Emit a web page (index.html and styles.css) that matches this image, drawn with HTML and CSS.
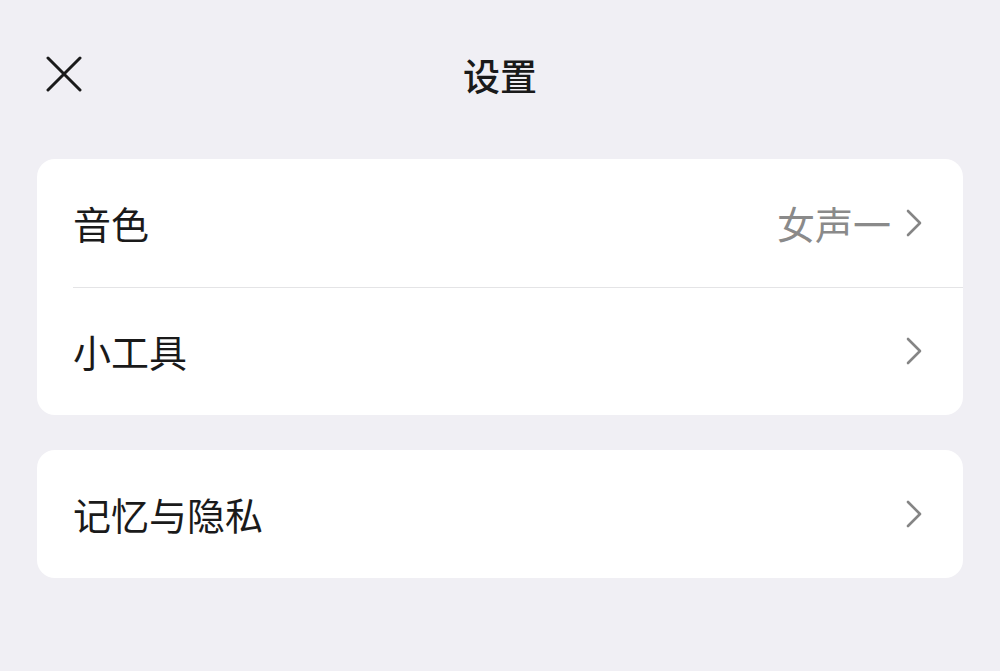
FILE: index.html
```html
<!DOCTYPE html>
<html lang="zh">
<head>
<meta charset="utf-8">
<link rel="stylesheet" href="styles.css">
</head>
<body>
<header class="header">
  <button class="close" aria-label="关闭">
    <svg width="36" height="36" viewBox="0 0 36 36"><path d="M2 2 L34 34 M34 2 L2 34" stroke="#1a1a1a" stroke-width="3" stroke-linecap="round" fill="none"/></svg>
  </button>
  <h1 class="title">设置</h1>
</header>
<main class="content">
  <section class="card">
    <div class="row">
      <span class="label">音色</span>
      <span class="right"><span class="value">女声一</span>
        <svg class="chev" width="16" height="28" viewBox="0 0 16 28"><path d="M2 2 L14 14 L2 26" stroke="#858585" stroke-width="2.6" stroke-linecap="round" stroke-linejoin="round" fill="none"/></svg>
      </span>
    </div>
    <div class="row">
      <span class="label">小工具</span>
      <span class="right">
        <svg class="chev" width="16" height="28" viewBox="0 0 16 28"><path d="M2 2 L14 14 L2 26" stroke="#858585" stroke-width="2.6" stroke-linecap="round" stroke-linejoin="round" fill="none"/></svg>
      </span>
    </div>
  </section>
  <section class="card">
    <div class="row">
      <span class="label">记忆与隐私</span>
      <span class="right">
        <svg class="chev" width="16" height="28" viewBox="0 0 16 28"><path d="M2 2 L14 14 L2 26" stroke="#858585" stroke-width="2.6" stroke-linecap="round" stroke-linejoin="round" fill="none"/></svg>
      </span>
    </div>
  </section>
</main>
</body>
</html>
```
FILE: styles.css
```css
html, body {
  margin: 0;
  padding: 0;
  background: #f0eff4;
  font-family: "Noto Sans CJK SC", "Noto Sans", sans-serif;
  color: #1a1a1a;
}
.header {
  position: relative;
  height: 150px;
  display: flex;
  align-items: center;
  justify-content: center;
}
.close {
  position: absolute;
  left: 46px;
  top: 56px;
  width: 36px;
  height: 36px;
  padding: 0;
  border: 0;
  background: none;
  display: flex;
}
.title {
  margin: 0;
  font-size: 37px;
  font-weight: 500;
  line-height: 1;
}
.content {
  padding: 9px 37px 0;
  display: flex;
  flex-direction: column;
  gap: 35px;
}
.card {
  background: #fff;
  border-radius: 18px;
  overflow: hidden;
}
.row {
  height: 128px;
  display: flex;
  align-items: center;
  justify-content: space-between;
  padding: 0 41px 0 36px;
  position: relative;
}
.row + .row::before {
  content: "";
  position: absolute;
  left: 36px;
  right: 0;
  top: 0;
  height: 1px;
  background: #e4e4e6;
}
.label {
  font-size: 38px;
  line-height: 1;
}
.right {
  display: flex;
  align-items: center;
  gap: 15px;
}
.value {
  font-size: 38px;
  line-height: 1;
  color: #8a8a8a;
}
.chev {
  display: block;
}
```
